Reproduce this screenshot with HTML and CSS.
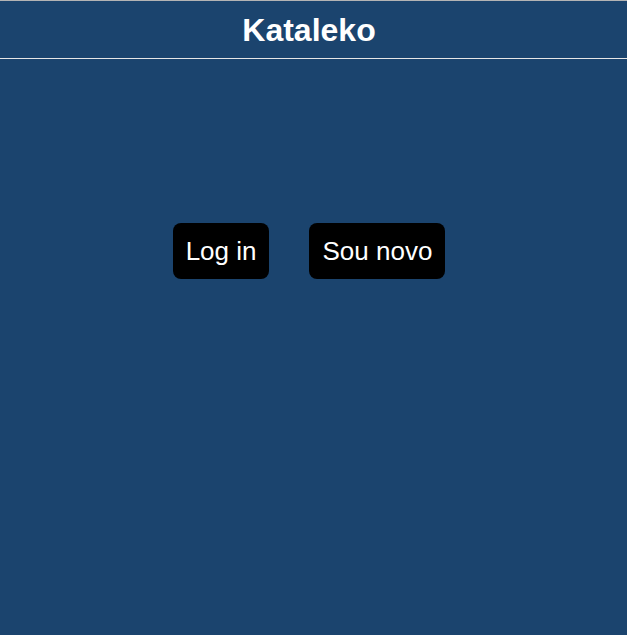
FILE: index.html
```html
<!DOCTYPE html>
<html>
<head>
<meta charset="utf-8">
<link rel="stylesheet" href="styles.css">
</head>
<body>
<header class="top">
  <h1 class="title">Kataleko</h1>
</header>
<main class="main">
  <div class="actions">
    <button class="btn">Log in</button>
    <button class="btn">Sou novo</button>
  </div>
</main>
</body>
</html>
```
FILE: styles.css
```css
html, body {
  margin: 0;
  padding: 0;
  height: 100%;
}
body {
  background: #1b446e;
  font-family: "Liberation Sans", Arial, sans-serif;
  color: #fff;
  border-top: 1px solid #b4b4b4;
  box-sizing: border-box;
}
.top {
  height: 57px;
  border-bottom: 1px solid #e6e6e6;
  display: flex;
  align-items: center;
  justify-content: center;
  padding-right: 9px;
}
.title {
  margin: 0;
  font-size: 32px;
  font-weight: bold;
  line-height: 1;
}
.main {
  padding-top: 164px;
  padding-right: 9px;
}
.actions {
  display: flex;
  justify-content: center;
  gap: 40px;
}
.btn {
  background: #000;
  color: #fff;
  border: none;
  border-radius: 8px;
  font-family: "Liberation Sans", Arial, sans-serif;
  font-size: 26px;
  line-height: 30px;
  padding: 13px 13px;
  height: 56px;
}
```
